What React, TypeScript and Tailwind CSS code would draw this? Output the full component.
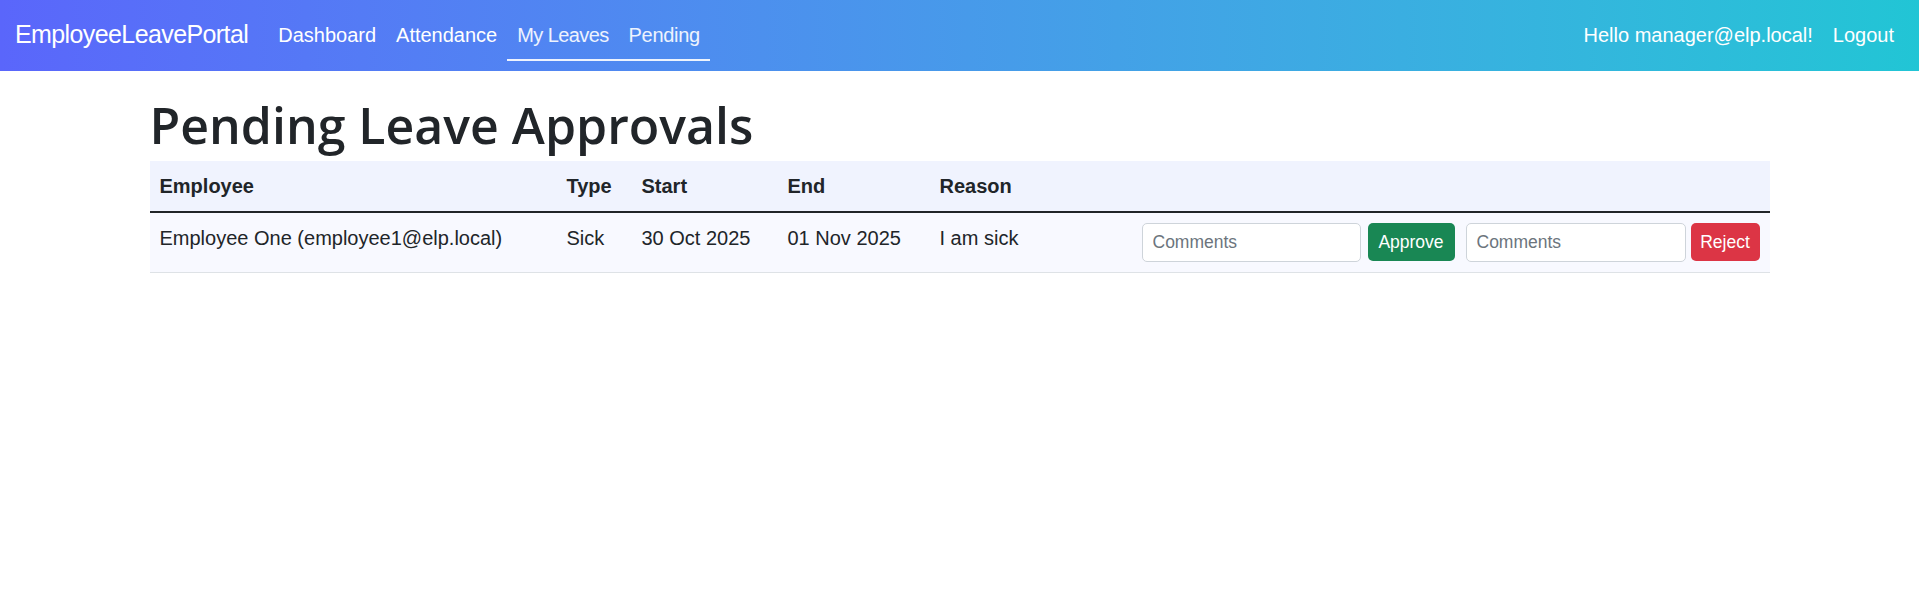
import { useState } from 'react'

const FONT = "font-['Liberation_Sans','Segoe_UI',Arial,sans-serif]"

type Leave = { id: number; employee: string; type: string; start: string; end: string; reason: string }

const PENDING: Leave[] = [
  { id: 1, employee: 'Employee One (employee1@elp.local)', type: 'Sick', start: '30 Oct 2025', end: '01 Nov 2025', reason: 'I am sick' },
]

function NavLink({ children, className = '' }: { children: React.ReactNode; className?: string }) {
  return <a href="#" className={`px-[10px] leading-[30px] text-[20px] no-underline ${className}`}>{children}</a>
}

export default function App() {
  const [comments, setComments] = useState<Record<string, string>>({})
  const setC = (k: string, v: string) => setComments((c) => ({ ...c, [k]: v }))

  return (
    <div className={`min-h-screen bg-white text-[#212529] ${FONT}`}>
      <nav className="flex items-start h-[71px] pt-[10px] px-[15px] bg-gradient-to-r from-[#5a66fb] to-[#21c5d5] text-white">
        <a href="#" className="py-[6px] mr-[20px] text-[25px] leading-[37.5px] tracking-[-0.6px] text-white">EmployeeLeavePortal</a>
        <div className="flex">
          <NavLink className="py-[10px] text-white">Dashboard</NavLink>
          <NavLink className="py-[10px] text-white">Attendance</NavLink>
          <div className="flex border-b-[2.5px] border-white/90">
            <NavLink className="pt-[10px] pb-[9px] text-white/90 tracking-[-0.6px]">My Leaves</NavLink>
            <NavLink className="pt-[10px] pb-[9px] text-white/90 tracking-[-0.3px]">Pending</NavLink>
          </div>
        </div>
        <div className="ml-auto flex">
          <NavLink className="py-[10px] text-white">Hello manager@elp.local!</NavLink>
          <NavLink className="py-[10px] text-white">Logout</NavLink>
        </div>
      </nav>

      <main className="w-[1650px] mx-auto px-[15px]">
        <h1 className="mt-[24px] mb-[6px] text-[50px] leading-[60px] font-semibold font-['Open_Sans',sans-serif]">Pending Leave Approvals</h1>

        <table className="w-full table-fixed border-collapse text-[20px] leading-[30px]">
          <colgroup>
            <col className="w-[407px]" />
            <col className="w-[75px]" />
            <col className="w-[146px]" />
            <col className="w-[152px]" />
            <col className="w-[203px]" />
            <col />
          </colgroup>
          <thead className="bg-[#f0f3fe]">
            <tr className="border-b-[2.5px] border-[#212529]">
              <th className="p-[10px] text-left font-bold">Employee</th>
              <th className="p-[10px] text-left font-bold">Type</th>
              <th className="p-[10px] text-left font-bold">Start</th>
              <th className="p-[10px] text-left font-bold">End</th>
              <th className="p-[10px] text-left font-bold">Reason</th>
              <th className="p-[10px]"></th>
            </tr>
          </thead>
          <tbody>
            {PENDING.map((l) => (
              <tr key={l.id} className="bg-[#f8f9ff] border-b-[1.25px] border-[#dee2e6]">
                <td className="p-[10px] align-top whitespace-nowrap">{l.employee}</td>
                <td className="p-[10px] align-top">{l.type}</td>
                <td className="p-[10px] align-top">{l.start}</td>
                <td className="p-[10px] align-top">{l.end}</td>
                <td className="p-[10px] align-top">{l.reason}</td>
                <td className="p-[10px] align-top">
                  <div className="flex items-center justify-end">
                    <form className="flex items-center gap-[7px]" onSubmit={(e) => e.preventDefault()}>
                      <input value={comments[`a${l.id}`] || ''} onChange={(e) => setC(`a${l.id}`, e.target.value)}
                        placeholder="Comments"
                        className="w-[219px] h-[38.5px] px-[10px] bg-white border-[1.25px] border-[#ced4da] rounded-[5px] text-[17.5px] placeholder:text-[#6c757d] outline-none" />
                      <button className="w-[87px] h-[38px] rounded-[5px] bg-[#198754] text-white text-[17.5px] leading-none">Approve</button>
                    </form>
                    <form className="flex items-center gap-[5px] ml-[11px]" onSubmit={(e) => e.preventDefault()}>
                      <input value={comments[`r${l.id}`] || ''} onChange={(e) => setC(`r${l.id}`, e.target.value)}
                        placeholder="Comments"
                        className="w-[220px] h-[38.5px] px-[10px] bg-white border-[1.25px] border-[#ced4da] rounded-[5px] text-[17.5px] placeholder:text-[#6c757d] outline-none" />
                      <button className="w-[69px] h-[38px] rounded-[5px] bg-[#dc3545] text-white text-[17.5px] leading-none">Reject</button>
                    </form>
                  </div>
                </td>
              </tr>
            ))}
          </tbody>
        </table>
      </main>
    </div>
  )
}
